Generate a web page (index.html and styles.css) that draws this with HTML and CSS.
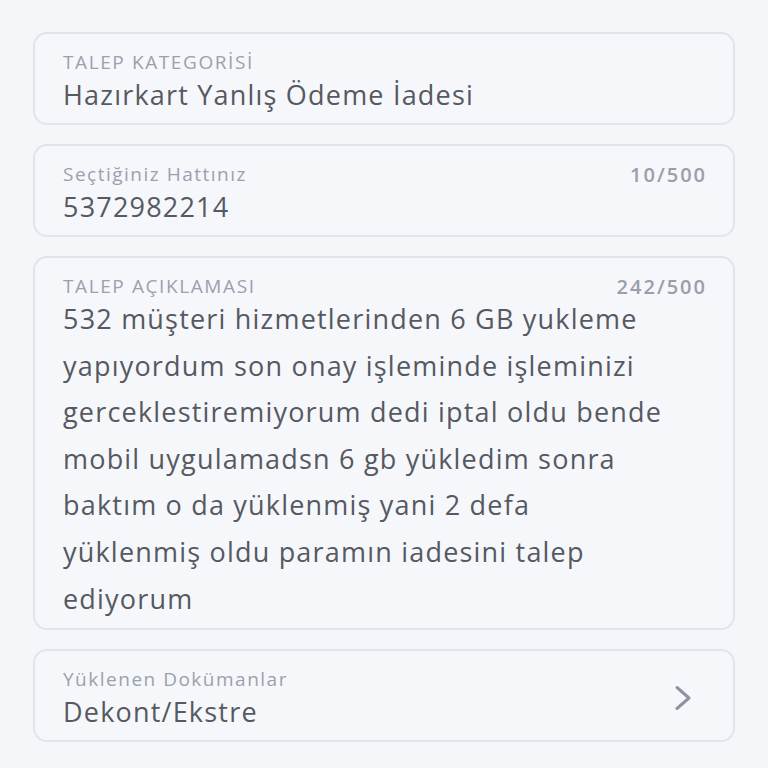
FILE: index.html
```html
<!DOCTYPE html>
<html lang="tr">
<head>
    <meta charset="UTF-8">
    <meta name="viewport" content="width=device-width, initial-scale=1.0">
    <title>Talep Detayı</title>
    <link rel="stylesheet" href="styles.css">
</head>
<body>
    <div class="form-list">
        <div class="field-card">
            <div class="field-head">
                <span class="field-label caps">TALEP KATEGORİSİ</span>
            </div>
            <div class="field-value">Hazırkart Yanlış Ödeme İadesi</div>
        </div>

        <div class="field-card">
            <div class="field-head">
                <span class="field-label">Seçtiğiniz Hattınız</span>
                <span class="field-count">10/500</span>
            </div>
            <div class="field-value">5372982214</div>
        </div>

        <div class="field-card description">
            <div class="field-head">
                <span class="field-label caps">TALEP AÇIKLAMASI</span>
                <span class="field-count">242/500</span>
            </div>
            <div class="field-value long-text">532 müşteri hizmetlerinden 6 GB yukleme<br>yapıyordum son onay işleminde işleminizi<br>gerceklestiremiyorum dedi iptal oldu bende<br>mobil uygulamadsn 6 gb yükledim sonra<br>baktım o da yüklenmiş yani 2 defa<br>yüklenmiş oldu paramın iadesini talep<br>ediyorum</div>
        </div>

        <div class="field-card link-card">
            <div class="link-text">
                <div class="field-head">
                    <span class="field-label">Yüklenen Dokümanlar</span>
                </div>
                <div class="field-value">Dekont/Ekstre</div>
            </div>
            <svg class="chevron" width="18" height="26" viewBox="0 0 18 26">
                <path d="M3 2.5 L15 13 L3 23.5" fill="none" stroke="#8d93a1" stroke-width="3" stroke-linecap="round" stroke-linejoin="round"/>
            </svg>
        </div>
    </div>
</body>
</html>
```

FILE: styles.css
```css
body {
    margin: 0;
    background-color: #f4f6f9;
    font-family: 'Open Sans', 'Noto Sans', sans-serif;
    color: #555962;
}

.form-list {
    display: flex;
    flex-direction: column;
    gap: 19px;
    padding: 32px 33px;
}

.field-card {
    background: #f6f7fa;
    border: 2px solid #e1e4eb;
    border-radius: 14px;
    padding: 15px 28px 11px 28px;
}

.field-head {
    display: flex;
    justify-content: space-between;
    align-items: center;
    height: 26px;
}

.field-label {
    font-size: 19px;
    letter-spacing: 1.5px;
    color: #9ba0af;
}

.field-label.caps {
    font-size: 19px;
    letter-spacing: 1.6px;
}

.field-count {
    font-size: 20px;
    font-weight: 600;
    letter-spacing: 2px;
    margin-right: -2px;
    color: #9a9eab;
}

.field-value {
    font-size: 27px;
    line-height: 34px;
    letter-spacing: 1.2px;
    margin-top: 3px;
    color: #555962;
}

.description {
    padding-bottom: 6px;
}

.long-text {
    line-height: 46.6px;
    margin-top: -3px;
}

.link-card {
    display: flex;
    align-items: center;
    justify-content: space-between;
}

.chevron {
    margin-right: 13px;
}
```
